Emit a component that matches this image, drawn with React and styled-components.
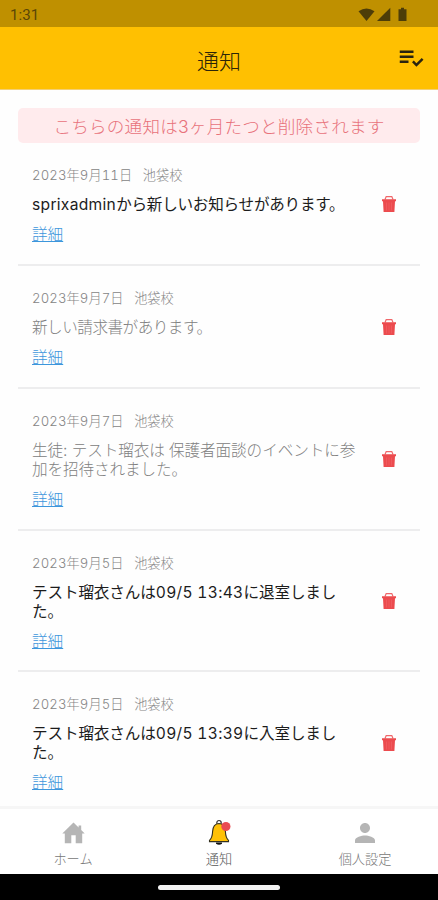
import React from "react";
import styled, { createGlobalStyle } from "styled-components";
import { MdPlaylistAddCheck, MdPerson } from "react-icons/md";

const Global = createGlobalStyle`
  * { box-sizing: border-box; }
  body { margin: 0; background: #fff; font-family: Inter, "Noto Sans CJK JP", sans-serif; }
`;

const Screen = styled.div`
  width: 438px;
  height: 900px;
  display: flex;
  flex-direction: column;
  overflow: hidden;
  background: #fefefe;
`;

const StatusBar = styled.div`
  flex: none;
  height: 27px;
  padding: 2px 30px 0 10px;
  display: flex;
  align-items: center;
  justify-content: space-between;
  background: #bf9000;
  color: #594607;
  font: 400 15px/20px Roboto, sans-serif;
  letter-spacing: 0.1px;
`;

const Header = styled.header`
  flex: none;
  height: 63px;
  padding: 0 12px 0 42px;
  display: grid;
  grid-template-columns: 1fr 30px;
  align-items: center;
  background: #ffc001;
  border-bottom: 1px solid #f3cf74;
  color: #2c2508;
`;

const Title = styled.h1`
  margin: 6px 0 0;
  text-align: center;
  font-size: 22px;
  line-height: 30px;
  font-weight: 300;
`;

const ReadAll = styled.button`
  margin: 0;
  padding: 0;
  border: 0;
  background: none;
  display: flex;
  color: #2a2410;
`;

const List = styled.main`
  flex: 1;
  min-height: 0;
  overflow: hidden;
  padding: 18px 18px 0;
`;

const Banner = styled.div`
  height: 35px;
  border-radius: 5px;
  background: #ffebed;
  color: #e8727b;
  text-align: center;
  font-size: 17.6px;
  letter-spacing: 0.2px;
  line-height: 38px;
  font-weight: 300;
  white-space: nowrap;
`;

const Item = styled.article`
  display: flex;
  align-items: center;
  height: ${(p) => (p.$tall ? 141.7 : 123)}px;
  padding: 1px 23px 0 14px;
  border-bottom: 2px solid #ededee;
`;

const Body = styled.div`
  flex: 1;
  min-width: 0;
  padding-top: 3px;
  display: flex;
  flex-direction: column;
  align-items: flex-start;
`;

const Meta = styled.div`
  display: flex;
  gap: 10.5px;
  height: 16px;
  font-size: 13.2px;
  line-height: 16px;
  font-weight: 300;
  color: #858585;
  font-variant-numeric: tabular-nums;
  white-space: nowrap;
`;

const DateText = styled.span`
  letter-spacing: 0.1px;
`;

const Message = styled.p`
  margin: 12px 0 11px;
  font-size: 15.6px;
  line-height: 19px;
  font-weight: ${(p) => (p.$read ? 300 : 400)};
  color: ${(p) => (p.$read ? "#808080" : "#1c1c1c")};
  letter-spacing: ${(p) => p.$spacing}px;
  white-space: pre;
`;

const Line = styled.span`
  display: block;
  height: 19px;
`;

const Latin = styled.span`
  letter-spacing: 0.3px;
  font-variant-numeric: tabular-nums;
`;

const Detail = styled.a`
  font-size: 15.6px;
  line-height: 19px;
  font-weight: 300;
  color: #3c96dc;
  text-decoration: underline;
  text-decoration-thickness: 1px;
  text-underline-offset: 1px;
`;

const Delete = styled.button`
  flex: none;
  margin: 0;
  padding: 0;
  border: 0;
  background: none;
  display: flex;
`;

const Nav = styled.nav`
  flex: none;
  height: 68px;
  padding-top: 8px;
  display: grid;
  grid-template-columns: repeat(3, 1fr);
  background: #fff;
  border-top: 3px solid #f6f6f6;
`;

const Tab = styled.div`
  display: flex;
  flex-direction: column;
  align-items: center;
  font-size: 13.2px;
  font-weight: 300;
  line-height: 23px;
  color: ${(p) => (p.$active ? "#555" : "#777")};
`;

const TabIcon = styled.div`
  height: 31px;
  display: flex;
  align-items: center;
  justify-content: center;
  color: #b5b5b5;
`;

const SystemBar = styled.div`
  flex: none;
  height: 26px;
  display: flex;
  justify-content: center;
  align-items: center;
  background: #000;
`;

const HomePill = styled.div`
  width: 122px;
  height: 5px;
  border-radius: 3px;
  background: #f2f2f2;
`;

const StatusIcons = () => (
  <svg width="50" height="16" viewBox="0 0 50 16" fill="#4d3d08">
    <path d="M0.5 4.2Q8.500 -1.400 16.500 4.200L8.500 14Z" />
    <path d="M19 14L32.300 0.800V14Z" />
    <path d="M40.500 2.200h2.500V0.700h3v1.500H48.500V14h-8z" />
  </svg>
);

const Trash = () => (
  <svg width="16" height="18" viewBox="0 0 16 18">
    <path d="M4 4.500L5.200 1.600h5.600L12 4.500" fill="none" stroke="#f0676a" strokeWidth="1.200" />
    <path d="M1 4.200h14v2.100h-1l-.6 10.700H2.600L2 6.300H1z" fill="#ec4b4e" />
    <path d="M5.500 7.500v8M8 7.500v8M10.500 7.500v8" stroke="#f06265" strokeWidth=".7" />
  </svg>
);

const HomeIcon = () => (
  <svg width="23" height="22" viewBox="0 0 23 22" fill="currentColor">
    <path d="M11.500 .5L.3 11.500h2.500V21.200h6.500v-8h4.400v8h6.500v-9.700h2.500L19.200 8.100V3.600h-2.600v2z" />
  </svg>
);

const BellIcon = () => (
  <svg width="24" height="28" viewBox="0 0 24 28">
    <circle cx="12" cy="3.700" r="2.200" fill="#fff" stroke="#333" strokeWidth="1.200" />
    <path d="M9 23.500h6v1.200q-3 2.300-6 0z" fill="#111" />
    <path
      d="M12 4.500C7.400 4.800 5.800 8.500 5.600 12.500C5.400 17 4.600 19.500 2.500 21.300V22.600h19v-1.300C19.400 19.500 18.600 17 18.400 12.500C18.200 8.500 16.600 4.800 12 4.500Z"
      fill="#ffc107"
      stroke="#33301f"
      strokeWidth="1.100"
    />
    <circle cx="18.900" cy="7.500" r="4.600" fill="#ea4b52" />
  </svg>
);

const notices = [
  { date: "2023年9月11日", lines: ["sprixadminから新しいお知らせがあります。"], spacing: -0.25 },
  { date: "2023年9月7日", lines: ["新しい請求書があります。"], read: true, spacing: -0.5 },
  {
    date: "2023年9月7日",
    lines: ["生徒: テスト瑠衣は 保護者面談のイベントに参", "加を招待されました。"],
    read: true,
    spacing: -0.08,
  },
  { date: "2023年9月5日", lines: ["テスト瑠衣さんは09/5 13:43に退室しまし", "た。"], spacing: -0.13 },
  { date: "2023年9月5日", lines: ["テスト瑠衣さんは09/5 13:39に入室しまし", "た。"], spacing: -0.13 },
];

const LATIN = /([a-z]+|\d[\d/: ]*\d)/;

const Notice = ({ date, lines, read, spacing }) => (
  <Item $tall={lines.length > 1}>
    <Body>
      <Meta>
        <DateText>{date}</DateText>
        <span>池袋校</span>
      </Meta>
      <Message $read={read} $spacing={spacing}>
        {lines.map((line) => (
          <Line key={line}>
            {line.split(LATIN).map((part, i) => (i % 2 ? <Latin key={i}>{part}</Latin> : part))}
          </Line>
        ))}
      </Message>
      <Detail>詳細</Detail>
    </Body>
    <Delete aria-label="削除">
      <Trash />
    </Delete>
  </Item>
);

export default function App() {
  return (
    <Screen>
      <Global />
      <StatusBar>
        <span>1:31</span>
        <StatusIcons />
      </StatusBar>
      <Header>
        <Title>通知</Title>
        <ReadAll aria-label="すべて既読">
          <MdPlaylistAddCheck size={30} />
        </ReadAll>
      </Header>
      <List>
        <Banner>こちらの通知は3ヶ月たつと削除されます</Banner>
        {notices.map((n, i) => (
          <Notice key={i} {...n} />
        ))}
      </List>
      <Nav>
        <Tab>
          <TabIcon><HomeIcon /></TabIcon>
          ホーム
        </Tab>
        <Tab $active>
          <TabIcon><BellIcon /></TabIcon>
          通知
        </Tab>
        <Tab>
          <TabIcon><MdPerson size={30} /></TabIcon>
          個人設定
        </Tab>
      </Nav>
      <SystemBar>
        <HomePill />
      </SystemBar>
    </Screen>
  );
}
